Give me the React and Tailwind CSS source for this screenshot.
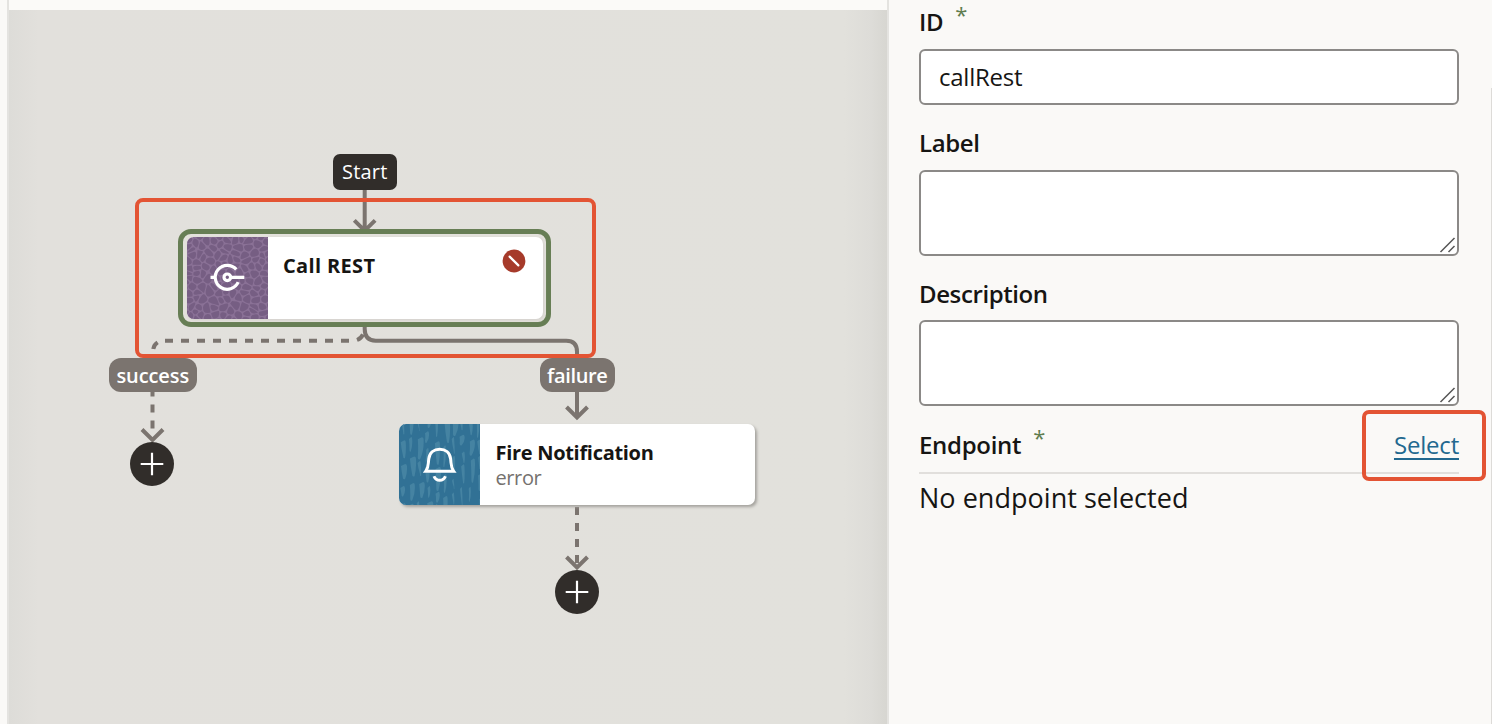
import React from 'react';

/* Seeded random numbers keep the tile textures stable between renders. */
function random(seed) {
  let s = seed;
  return () => {
    s = (s * 16807) % 2147483647;
    return s / 2147483647;
  };
}

/* Rounded cells around jittered seeds, used as the purple tile texture. */
function buildCells() {
  const rnd = random(77);
  const pts = [];
  for (let r = -1; r < 14; r++) {
    for (let c = -1; c < 11; c++) {
      pts.push([(c + 0.5 + (r % 2 ? 0.4 : 0) + (rnd() - 0.5) * 0.9) * 8.6, (r + 0.5 + (rnd() - 0.5) * 0.9) * 6.6]);
    }
  }
  return pts.map((p) => {
    let poly = [[p[0] - 12, p[1] - 12], [p[0] + 12, p[1] - 12], [p[0] + 12, p[1] + 12], [p[0] - 12, p[1] + 12]];
    for (const q of pts) {
      const dx = q[0] - p[0];
      const dy = q[1] - p[1];
      const d = Math.hypot(dx, dy);
      if (d === 0 || d > 26) continue;
      const side = (v) => ((v[0] - p[0]) * dx + (v[1] - p[1]) * dy) / d - (d / 2 - 0.5);
      const out = [];
      poly.forEach((a, i) => {
        const b = poly[(i + 1) % poly.length];
        const sa = side(a);
        const sb = side(b);
        if (sa <= 0) out.push(a);
        if (sa * sb < 0) {
          const t = sa / (sa - sb);
          out.push([a[0] + (b[0] - a[0]) * t, a[1] + (b[1] - a[1]) * t]);
        }
      });
      poly = out;
    }
    const mid = (a, b) => `${((a[0] + b[0]) / 2).toFixed(1)} ${((a[1] + b[1]) / 2).toFixed(1)}`;
    const n = poly.length;
    if (n < 3) return '';
    return `M${mid(poly[n - 1], poly[0])}` + poly.map((v, i) => `Q${v[0].toFixed(1)} ${v[1].toFixed(1)} ${mid(v, poly[(i + 1) % n])}`).join('') + 'Z';
  }).join('');
}

/* Long vertical flakes, used as the teal tile texture. */
function buildFlakes() {
  const rnd = random(4242);
  let d = '';
  for (let c = 0; c < 10; c++) {
    let y = -14 + rnd() * 14;
    while (y < 84) {
      const h = 10 + rnd() * 14;
      const w = 1.6 + rnd() * 4.6;
      const x = c * 8.6 + rnd() * 3;
      const k = (rnd() - 0.2) * 3;
      d += `M${x} ${y + 2}L${x + w * 0.7} ${y}Q${x + w} ${y} ${x + w} ${y + 2}Q${x + w + 0.6} ${y + h * 0.6} ${x + w * 0.4 + k} ${y + h}Q${x + k} ${y + h + 1} ${x + k} ${y + h - 2}Q${x + 0.6} ${y + h / 2} ${x} ${y + 2}Z`;
      y += h + 1 + rnd() * 6;
    }
  }
  return d;
}

const cells = buildCells();
const flakes = buildFlakes();

function AddButton({ className }) {
  return (
    <button className={`absolute flex size-[44px] items-center justify-center rounded-full bg-[#312d2a] ${className}`}>
      <svg width="24" height="24" viewBox="0 0 24 24" stroke="#fff" strokeWidth="2.2">
        <path d="M12 .7v22.6M.7 12h22.6" />
      </svg>
    </button>
  );
}

function Edges() {
  return (
    <svg className="absolute inset-0" width="878" height="714" viewBox="9 10 878 714" fill="none" stroke="#7b746f" strokeWidth="4">
      <path d="M364.7 188v41M354.3 220.3l10.4 10.4 10.4-10.4" />
      <path d="M364.7 326v3q0 11.7 11 11.7h190.500q10.800 0 10.800 11v66M566.500 407l10.500 10.500 10.500-10.500" />
      <path d="M165 340.700h185" strokeDasharray="8 8" />
      <path d="M357 340q4-1.500 6-5.500M153.300 349q.4-4 4.300-6.600" />
      <path d="M152.500 388.500v44" strokeDasharray="8 8" />
      <path d="M142 429.500l10.500 10.500 10.500-10.500" />
      <path d="M577 507v57" strokeDasharray="8 8" />
      <path d="M566.500 557l10.500 10.500 10.500-10.500" />
    </svg>
  );
}

function Canvas() {
  return (
    <div className="relative flex-1 overflow-hidden bg-[linear-gradient(90deg,#dddcd8_0px,#e2e0dc_30px,#e2e1dc_835px,#dddcd8_862px,#d7d6d1_878px)]">
      <Edges />
      <div className="absolute left-[323.500px] top-[144px] flex h-[35.500px] w-[64.500px] items-center justify-center rounded-[7px] bg-[#312d2a] text-[20px] tracking-[0.200px] text-white">
        Start
      </div>

      <div className="absolute left-[169px] top-[218.500px] h-[98.500px] w-[373px] rounded-[13px] border-[5px] border-[#677e55] bg-[#e3e1dc] p-[3.500px]">
        <div className="flex h-[81.500px] w-[356px] overflow-hidden rounded-[7px] bg-white shadow-[1px_1px_3px_#d2d0cb]">
          <svg className="shrink-0" width="81" height="82" viewBox="0 0 81 82">
            <rect width="81" height="82" fill="#8a7196" />
            <path d={cells} fill="#765e83" />
            <g fill="none" stroke="#fff" strokeWidth="3.200">
              <path d="M49.300 32.400A12 12 0 1 0 51.200 45.200" />
              <path d="M23.500 40.300h5M43 40.300h14.300" />
              <circle cx="40.300" cy="40.300" r="3.300" fill="#765e83" />
            </g>
          </svg>
          <div className="flex flex-1 justify-between pl-[15.500px] pr-[16.500px]">
            <div className="pt-[15px] text-[20px] font-bold leading-7 tracking-[0.350px] text-[#161513]">Call REST</div>
            <svg className="mt-[12px]" width="24" height="24" viewBox="0 0 24 24">
              <circle cx="12" cy="12" r="11.400" fill="#a63a2a" />
              <path d="M7.600 7.600l8.800 8.800" stroke="#fff" strokeWidth="2.200" strokeLinecap="round" />
            </svg>
          </div>
        </div>
      </div>

      <div className="absolute left-[390px] top-[414px] flex h-[81px] w-[356px] overflow-hidden rounded-[7px] bg-white shadow-[2px_2px_3px_#a5a39e]">
        <svg className="shrink-0" width="81" height="81" viewBox="0 0 81 81">
          <rect width="81" height="81" fill="#317195" />
          <path d={flakes} fill="#4583a2" />
          <g fill="none" stroke="#fff" strokeWidth="3">
            <path d="M26.800 47.200c3-4 2.200-7 3-12.500C30.600 28.500 35 25.300 40.700 25.300s10.100 3.200 10.900 9.400c.8 5.500 0 8.500 3 12.500z" />
            <path d="M35 52.200c1.300 3.200 3.300 4.100 5.700 4.100s4.400-.9 5.700-4.100" />
          </g>
        </svg>
        <div className="pl-[15.500px] pt-[15px]">
          <div className="text-[20px] font-bold leading-7 tracking-[-0.300px] text-[#161513]">Fire Notification</div>
          <div className="-mt-px text-[20px] leading-6 tracking-[-0.400px] text-[#75716e]">error</div>
        </div>
      </div>

      <div className="absolute left-[126px] top-[188px] h-[160px] w-[461px] rounded-[8px] border-4 border-[#e35434]" />
      <div className="absolute left-[100px] top-[348px] flex h-[33.500px] w-[87.500px] items-center justify-center rounded-[12px] bg-[#7b746f] pt-[2px] text-[20px] font-semibold tracking-[-0.100px] text-white">
        success
      </div>
      <div className="absolute left-[530.500px] top-[348px] flex h-[33.500px] w-[75.500px] items-center justify-center rounded-[12px] bg-[#7b746f] pt-[2px] text-[20px] font-semibold tracking-[-0.350px] text-white">
        failure
      </div>
      <AddButton className="left-[121px] top-[432px]" />
      <AddButton className="left-[546px] top-[560px]" />
    </div>
  );
}

function Resizer() {
  return (
    <svg className="mb-px mr-px" width="18" height="18" viewBox="0 0 18 18" stroke="#555" strokeWidth="1.500">
      <path d="M2.500 17L16.500 3M10.500 17l6-6" />
    </svg>
  );
}

function TextArea() {
  return (
    <div className="flex h-[86px] items-end justify-end rounded-[6px] border-2 border-[#8b8987] bg-white">
      <Resizer />
    </div>
  );
}

function Properties() {
  return (
    <div className="flex flex-1 bg-[#faf9f7] text-[#161513]">
      <div className="ml-[30px] w-[540px]">
        <div className="flex h-[49px] pt-[5px] text-[24px] font-semibold leading-[34px] tracking-[-0.400px]">
          <span>ID</span>
          <span className="ml-[12px] -mt-[8px] text-[22px] font-normal text-[#5f7d4f]">*</span>
        </div>
        <div className="flex h-[56px] items-center rounded-[6px] border-2 border-[#8b8987] bg-white pl-[18px] text-[24px] tracking-[-0.250px]">
          <span>callRest</span>
        </div>
        <div className="h-[65px] pt-[21px] text-[24px] font-semibold leading-[34px] tracking-[-0.400px]"><span>Label</span></div>
        <TextArea />
        <div className="h-[64px] pt-[21px] text-[24px] font-semibold leading-[34px] tracking-[-0.400px]"><span>Description</span></div>
        <TextArea />
        <div className="relative flex h-[68px] justify-between border-b-2 border-[#e1dfdc] pt-[22px] text-[24px] leading-[34px]">
          <div className="flex font-semibold tracking-[-0.300px]">
            <span>Endpoint</span>
            <span className="ml-[12px] -mt-[8px] text-[22px] font-normal text-[#5f7d4f]">*</span>
          </div>
          <a className="tracking-[-0.200px] text-[#22688f] underline decoration-2 underline-offset-4">Select</a>
          <div className="absolute -right-[27px] top-[4px] h-[71px] w-[124px] rounded-[7px] border-4 border-[#e35434]" />
        </div>
        <div className="pt-[4px] text-[27px] leading-[40px] tracking-[0.030px]"><span>No endpoint selected</span></div>
      </div>
      <div className="ml-auto mt-[88px] w-px bg-[#dddbd8]" />
    </div>
  );
}

export default function App() {
  return (
    <div className="flex h-[724px] w-[1492px] overflow-hidden bg-[#fbfaf8] font-['Open_Sans','Noto_Sans',sans-serif]">
      <div className="w-[7px] shrink-0 bg-[#faf9f7]" />
      <div className="flex w-[882px] shrink-0 flex-col border-x-2 border-[#e4e3e0]">
        <div className="h-[10px] bg-[#fbfaf8]" />
        <Canvas />
      </div>
      <Properties />
    </div>
  );
}
